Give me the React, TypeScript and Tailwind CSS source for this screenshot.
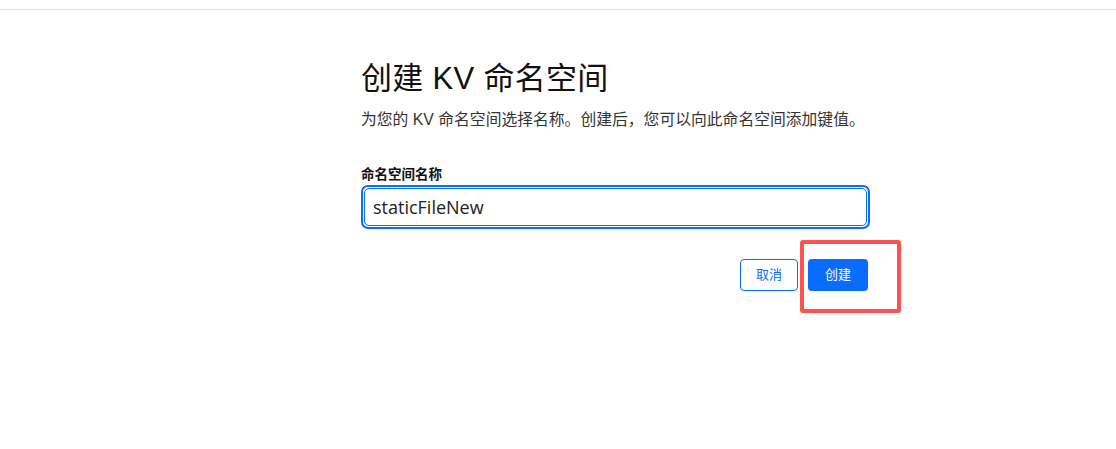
import React from 'react';

const font = "font-['Liberation_Sans','Noto_Sans_CJK_SC',sans-serif]";

const App: React.FC = () => {
  return (
    <div className={`relative w-full h-[449px] bg-white ${font}`}>
      {/* top bar edge */}
      <div className="h-[10px] border-b border-[#e2e2e2]" />

      <div className="ml-[361px] w-[509px] pt-[49px]">
        <h1 className="text-[31px] leading-[40px] text-[#111] tracking-[0.3px]">创建 KV 命名空间</h1>
        <p className="mt-[10px] text-[15.8px] leading-[22px] text-[#333]">
          为您的 KV 命名空间选择名称。创建后，您可以向此命名空间添加键值。
        </p>

        <label className="block mt-[36px] text-[13.5px] leading-[16px] font-bold text-[#111]">命名空间名称</label>
        <div className="mt-[2px] h-[44px] rounded-[7px] border-2 border-[#0a6cff] p-[1px]">
          <input
            defaultValue="staticFileNew"
            className="w-full h-full rounded-[5px] border border-[#0a6cff] px-[8px] text-[18px] text-[#222] outline-none font-['Open_Sans',sans-serif]"
          />
        </div>

        <div className="mt-[30px] flex justify-end gap-[10px] pr-[2px]">
          <button className="w-[58px] h-[32px] rounded-[4px] border border-[#0a6cff] text-[13px] text-[#0a6cff] bg-white">取消</button>
          <button className="w-[60px] h-[32px] rounded-[4px] bg-[#0a6cff] text-[13px] text-white">创建</button>
        </div>
      </div>

      {/* annotation box */}
      <div className="absolute left-[800px] top-[240px] w-[101px] h-[73px] border-4 border-[#fb5252] rounded-[3px]" />
    </div>
  );
};

export default App;
